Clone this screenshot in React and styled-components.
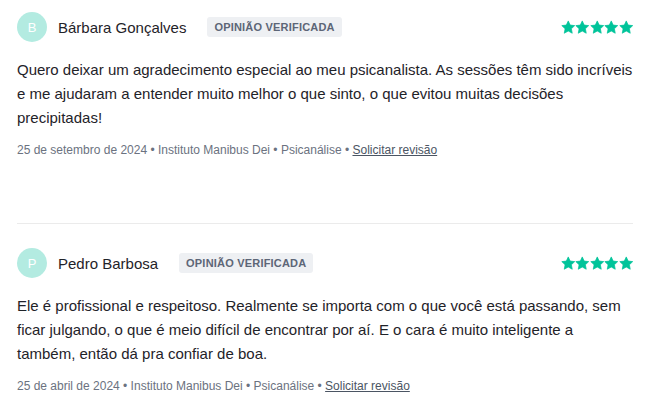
import React from 'react'
import styled, { createGlobalStyle } from 'styled-components'

const GlobalStyle = createGlobalStyle`
  body {
    margin: 0;
    background: #ffffff;
    font-family: "Liberation Sans", Arial, sans-serif;
  }
`

const List = styled.div`
  padding: 0 18px 0 17px;
`

const Review = styled.div`
  padding: ${p => (p.first ? '12px' : '24px')} 0 ${p => (p.last ? '16px' : '64px')};
  border-bottom: ${p => (p.last ? 'none' : '1px solid #ebebeb')};
`

const Header = styled.div`
  display: flex;
  align-items: center;
  height: 30px;
`

const Avatar = styled.div`
  width: 30px;
  height: 30px;
  border-radius: 50%;
  background-color: #b3ebe1;
  color: #ffffff;
  font-size: 13px;
  display: flex;
  align-items: center;
  justify-content: center;
  flex-shrink: 0;
`

const Name = styled.span`
  margin-left: 11px;
  font-size: 15px;
  color: #1f2329;
`

const Badge = styled.span`
  margin-left: 21px;
  padding: 4px 7px;
  border-radius: 3px;
  background-color: #eef0f3;
  color: #5d6677;
  font-size: 11px;
  font-weight: 700;
  letter-spacing: 0.2px;
  line-height: 12px;
`

const Stars = styled.div`
  margin-left: auto;
  display: flex;
  gap: 0;
`

const Body = styled.p`
  margin: 16px 0 0;
  font-size: 15px;
  line-height: 24px;
  color: #1f2329;
`

const Meta = styled.div`
  margin-top: 11px;
  font-size: 12px;
  line-height: 18px;
  color: #6b7280;
`

const Link = styled.a`
  color: #4b5563;
  text-decoration: underline;
  cursor: pointer;
`

function Star() {
  return (
    <svg width="14.5" height="14.5" viewBox="0 0 24 24">
      <path
        fill="#00c49a"
        stroke="#00c49a"
        strokeWidth="1.2"
        strokeLinejoin="round"
        d="M12 1.5l3.2 6.9 7.5.9-5.5 5.2 1.4 7.4L12 18.2l-6.6 3.7 1.4-7.4L1.3 9.3l7.5-.9z"
      />
    </svg>
  )
}

const reviews = [
  {
    initial: 'B',
    name: 'Bárbara Gonçalves',
    text: 'Quero deixar um agradecimento especial ao meu psicanalista. As sessões têm sido incríveis e me ajudaram a entender muito melhor o que sinto, o que evitou muitas decisões precipitadas!',
    date: '25 de setembro de 2024',
  },
  {
    initial: 'P',
    name: 'Pedro Barbosa',
    text: 'Ele é profissional e respeitoso. Realmente se importa com o que você está passando, sem ficar julgando, o que é meio difícil de encontrar por aí. E o cara é muito inteligente a também, então dá pra confiar de boa.',
    date: '25 de abril de 2024',
  },
]

export default function App() {
  return (
    <>
      <GlobalStyle />
      <List>
        {reviews.map((r, i) => (
          <Review key={r.name} first={i === 0} last={i === reviews.length - 1}>
            <Header>
              <Avatar>{r.initial}</Avatar>
              <Name>{r.name}</Name>
              <Badge>OPINIÃO VERIFICADA</Badge>
              <Stars>
                {[0, 1, 2, 3, 4].map(n => <Star key={n} />)}
              </Stars>
            </Header>
            <Body>{r.text}</Body>
            <Meta>
              {r.date} • Instituto Manibus Dei • Psicanálise • <Link>Solicitar revisão</Link>
            </Meta>
          </Review>
        ))}
      </List>
    </>
  )
}
